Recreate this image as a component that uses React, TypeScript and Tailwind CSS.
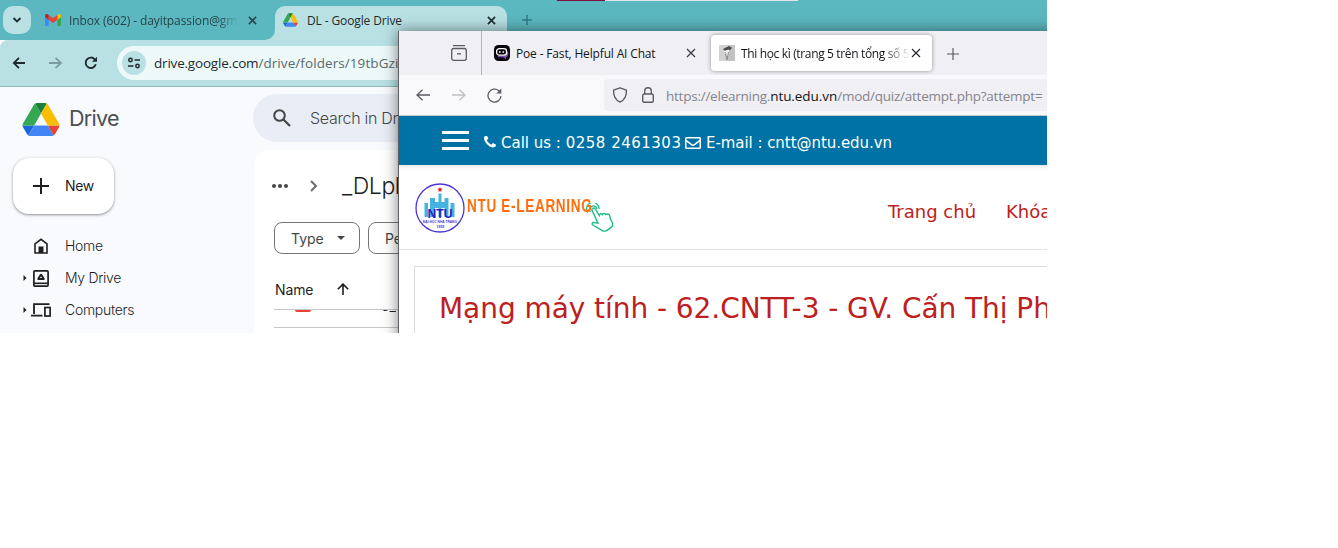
import React from "react";
import { FaRegEnvelope } from "react-icons/fa";

const ui = "font-['Open_Sans','Noto_Sans',sans-serif]";
const verdana = "font-['DejaVu_Sans',sans-serif]";

function Ic({ w, h = w, vb, className = "", children }: { w: number; h?: number; vb?: string; className?: string; children: React.ReactNode }) {
  return (
    <svg width={w} height={h} viewBox={vb ?? `0 0 ${w} ${h}`} className={`shrink-0 ${className}`} fill="none">
      {children}
    </svg>
  );
}

function DriveLogo({ w, h }: { w: number; h: number }) {
  return (
    <Ic w={w} h={h} vb="0 0 87.3 78">
      <path d="m6.6 66.85 3.85 6.65c.8 1.4 1.95 2.5 3.3 3.3l13.75-23.8h-27.5c0 1.55.4 3.1 1.2 4.5z" fill="#1967d2" />
      <path d="m43.65 25-13.75-23.8c-1.35.8-2.5 1.9-3.3 3.3l-25.4 44a9.06 9.06 0 0 0 -1.2 4.5h27.5z" fill="#34a853" />
      <path d="m73.55 76.8c1.35-.8 2.5-1.9 3.3-3.3l1.6-2.75 7.65-13.25c.8-1.4 1.2-2.95 1.2-4.5h-27.5l5.85 11.5z" fill="#ea4335" />
      <path d="m43.65 25 13.75-23.8c-1.35-.8-2.9-1.2-4.5-1.2h-18.5c-1.6 0-3.15.45-4.5 1.2z" fill="#188038" />
      <path d="m59.8 53h-32.3l-13.75 23.8c1.35.8 2.9 1.2 4.5 1.2h50.8c1.6 0 3.15-.45 4.5-1.2z" fill="#4285f4" />
      <path d="m73.4 26.5-12.7-22c-.8-1.4-1.95-2.5-3.3-3.3l-13.75 23.8 16.15 28h27.45c0-1.55-.4-3.1-1.2-4.5z" fill="#fbbc04" />
    </Ic>
  );
}

function Gmail() {
  return (
    <Ic w={16} h={12} vb="52 42 88 66">
      <path fill="#4285f4" d="M58 108h14V74L52 59v43c0 3.32 2.69 6 6 6" />
      <path fill="#34a853" d="M120 108h14c3.32 0 6-2.69 6-6V59l-20 15" />
      <path fill="#fbbc04" d="M120 48v26l20-15v-8c0-7.42-8.47-11.65-14.4-7.2" />
      <path fill="#ea4335" d="M72 74V48l24 18 24-18v26L96 92" />
      <path fill="#c5221f" d="M52 51v8l20 15V48l-5.6-4.2c-5.94-4.45-14.4-.22-14.4 7.2" />
    </Ic>
  );
}

function Cross({ size, color, sw }: { size: number; color: string; sw: number }) {
  return (
    <Ic w={size} vb="0 0 10 10">
      <path d="M1 1l8 8M9 1l-8 8" stroke={color} strokeWidth={sw} />
    </Ic>
  );
}

function ChromeTabs() {
  return (
    <div className="flex h-10 items-start bg-[#5cb8c0]">
      <div className="ml-[3px] mt-1.5 flex h-7 w-7 items-center justify-center rounded-[10px] bg-[#b9e1e4]">
        <Ic w={10} h={6}><path d="M1.500 1l3.500 3.400L8.500 1" stroke="#1f2a2c" strokeWidth="1.800" /></Ic>
      </div>
      <div className="relative flex h-10 w-[244px] items-center pl-[14px]">
        <Gmail />
        <span className={`${ui} ml-2 mt-px block w-[169px] overflow-hidden whitespace-nowrap text-[12px] tracking-[-0.1px] text-[#264348] [mask-image:linear-gradient(to_right,black_88%,transparent)]`}>
          Inbox (602) - dayitpassion@gm
        </span>
        <span className="ml-[10px] flex"><Cross size={9} color="#27474c" sw={1.800} /></span>
        <Ic w={10} className="absolute bottom-0 right-0"><path d="M10 0v10H0A10 10 0 0 0 10 0z" fill="#b9e1e4" /></Ic>
      </div>
      <div className="mt-1.5 flex h-[34px] w-[232px] items-center rounded-t-[10px] bg-[#b9e1e4] pb-1.5 pl-2">
        <DriveLogo w={15} h={14} />
        <span className={`${ui} ml-[9px] mt-px block w-[170px] whitespace-nowrap text-[12px] tracking-[-0.12px] text-[#1f2a2c]`}>DL - Google Drive</span>
        <span className="ml-[10px] flex"><Cross size={9} color="#1f2a2c" sw={1.800} /></span>
      </div>
      <span className="ml-[15px] mt-[15px]"><Ic w={10}><path d="M5 0v10M0 5h10" stroke="#2f7d85" strokeWidth="1.500" /></Ic></span>
    </div>
  );
}

function ChromeToolbar() {
  return (
    <div className="flex h-[47px] items-center rounded-tl-lg border-b border-[#8fb9bc] bg-[#b9e1e4] pl-3">
      <Ic w={14} h={12}><path d="M13 6H2M7 .8L1.800 6 7 11.200" stroke="#1f2a2c" strokeWidth="1.800" /></Ic>
      <Ic w={14} h={12} className="ml-[23px]"><path d="M0 6h12M6.500 .8L12 6 6.500 11.200" stroke="#7c9ea1" strokeWidth="1.800" /></Ic>
      <Ic w={14} className="ml-[21px]">
        <path d="M11.800 8.300A5.200 5.200 0 1 1 10.700 3.300L12 4.600" stroke="#1f2a2c" strokeWidth="1.900" />
        <path d="M13 .7v5.100H7.900z" fill="#1f2a2c" />
      </Ic>
      <div className="ml-[19px] flex h-[34px] w-[400px] items-center rounded-l-full bg-[#edf9f9] pl-[5px]">
        <div className="flex h-6 w-6 items-center justify-center rounded-full bg-[#b9e1e4]">
          <Ic w={12} h={12}>
            <circle cx="2.500" cy="3" r="1.700" stroke="#1f2a2c" strokeWidth="1.500" />
            <path d="M6.500 3H12M0 9h5.500" stroke="#1f2a2c" strokeWidth="1.700" />
            <circle cx="9.500" cy="9" r="1.700" stroke="#1f2a2c" strokeWidth="1.500" />
          </Ic>
        </div>
        <span className={`${ui} ml-2 whitespace-nowrap text-[13.5px] text-[#5b696b]`}>
          <span className="tracking-[-0.2px] text-[#1f2a2c]">drive.google.com</span><span className="tracking-[0.08px]">/drive/folders/19tbGzic</span>
        </span>
      </div>
    </div>
  );
}

function NavRow({ label, arrow, icon }: { label: string; arrow?: boolean; icon: React.ReactNode }) {
  return (
    <div className="flex h-8 items-center pl-[23px]">
      <span className="w-[7px]">{arrow && <Ic w={4} h={6}><path d="M.5 0l3 3-3 3z" fill="#1f1f1f" /></Ic>}</span>
      <span className="flex w-[22px] justify-center">{icon}</span>
      <span className="-mt-0.5 ml-[13px] whitespace-nowrap font-['Inter','Roboto',sans-serif] text-[14px] font-light tracking-[-0.3px] text-[#1f1f1f]">{label}</span>
    </div>
  );
}

function Sidebar() {
  return (
    <div className="w-[253px] shrink-0">
      <div className="flex h-16 items-center pl-[22px]">
        <DriveLogo w={38} h={33} />
        <span className="-mt-0.5 ml-[9px] font-['Inter',sans-serif] text-[21.5px] tracking-[-0.7px] text-[#4c4f52]">Drive</span>
      </div>
      <div className="ml-[13px] mt-[7px] flex h-14 w-[101px] items-center rounded-2xl bg-white pl-5 shadow-[0_1px_2px_rgba(60,64,67,0.4),0_1px_3px_1px_rgba(60,64,67,0.15)]">
        <Ic w={16}><path d="M8 0v16M0 8h16" stroke="#1f1f1f" strokeWidth="2" /></Ic>
        <span className="-mt-0.5 ml-4 font-['Inter',sans-serif] text-[14px] tracking-[-0.3px] text-[#1f1f1f]">New</span>
      </div>
      <div className="mt-4">
        <NavRow label="Home" icon={<Ic w={14} h={16}><path d="M1 15V5.800L7 1.300l6 4.500V15z" stroke="#1f1f1f" strokeWidth="1.600" /><path d="M4.500 8.500h5V15h-5z" fill="#1f1f1f" /></Ic>} />
        <NavRow arrow label="My Drive" icon={<Ic w={16} h={17}><rect x=".9" y=".9" width="14.200" height="15.200" rx="1" stroke="#1f1f1f" strokeWidth="1.700" /><path d="M1 13.300h14" stroke="#1f1f1f" strokeWidth="1.600" /><path d="M8 4.900L5.500 8.900h5z" stroke="#1f1f1f" strokeWidth="2.400" strokeLinejoin="round" /><path d="M8 6.300l1 1.800H7z" fill="#f9fafe" /></Ic>} />
        <NavRow arrow label="Computers" icon={<Ic w={20} h={14}><path d="M18.500 1.200H3V11M0 12.700h11.500" stroke="#1f1f1f" strokeWidth="1.800" /><rect x="13.900" y="4.500" width="5.200" height="8.500" stroke="#1f1f1f" strokeWidth="1.700" /></Ic>} />
      </div>
    </div>
  );
}

function DriveMain() {
  return (
    <div className="flex w-[500px] shrink-0 flex-col">
      <div className="mt-[7px] flex h-12 shrink-0 items-center rounded-full bg-[#e9eef6] pl-5">
        <Ic w={18}><circle cx="6.500" cy="6.500" r="5.300" stroke="#444746" strokeWidth="2" /><path d="M10.500 10.500l6.500 6.500" stroke="#444746" strokeWidth="2.200" /></Ic>
        <span className="ml-[19px] font-['Inter',sans-serif] text-[16px] font-light tracking-[-0.3px] text-[#444746]">Search in Drive</span>
      </div>
      <div className="ml-px mt-2 grow rounded-tl-2xl bg-white">
        <div className="flex h-[72px] items-center pl-[18px]">
          <Ic w={16} h={4}><circle cx="2" cy="2" r="2" fill="#444746" /><circle cx="8" cy="2" r="2" fill="#444746" /><circle cx="14" cy="2" r="2" fill="#444746" /></Ic>
          <Ic w={8} h={12} className="ml-[22px]"><path d="M1 1l5 5-5 5" stroke="#6b6e6d" strokeWidth="2" /></Ic>
          <span className="ml-6 font-['Inter',sans-serif] text-[23px] font-light tracking-[-0.4px] text-[#1f1f1f]">_DLpl</span>
        </div>
        <div className="flex gap-2 pl-5">
          <div className="flex h-8 w-[86px] items-center rounded-lg border border-[#747775] pl-4">
            <span className="w-[46px] font-['Inter',sans-serif] text-[14px] text-[#444746]">Type</span>
            <Ic w={8} h={4}><path d="M0 0h8L4 4z" fill="#444746" /></Ic>
          </div>
          <div className="flex h-8 w-[100px] items-center rounded-lg border border-[#747775] pl-4 font-['Inter',sans-serif] text-[14px] text-[#444746]">People</div>
        </div>
        <div className="ml-5 flex h-[56px] items-end border-b border-[#c7c7c7] pb-[9px] pl-px">
          <span className="w-[62px] font-['Inter',sans-serif] text-[14px] leading-5 tracking-[-0.1px] text-[#1f1f1f]">Name</span>
          <Ic w={12} h={12} className="mb-[5px]"><path d="M6 12V1.500M.8 6.300L6 1.100l5.200 5.200" stroke="#1f1f1f" strokeWidth="1.600" /></Ic>
        </div>
        <div className="ml-5 flex h-[18px] items-start border-b border-[#c7c7c7] pl-[21px]">
          <div className="h-[2px] w-4 rounded-b-sm bg-[#ea4335]" />
          <div className="ml-[70px] h-[2px] w-[15px] overflow-hidden">
            <span className="-mt-[13px] block font-['Inter',sans-serif] text-[14px] leading-[17px] text-[#1f1f1f]">5_</span>
          </div>
        </div>
      </div>
    </div>
  );
}

function FirefoxTabs() {
  return (
    <div className="flex h-11 shrink-0 items-center bg-[#f0eff4]">
      <div className="flex h-full w-[83px] items-center border-r border-[#b4b3b9] pl-[52px]">
        <Ic w={16} h={16}>
          <path d="M2.500 .7h11" stroke="#5b5b66" strokeWidth="1.300" strokeLinecap="round" />
          <rect x=".7" y="3.500" width="14.600" height="11.800" rx="2" stroke="#5b5b66" strokeWidth="1.300" />
          <path d="M6 8.800h4" stroke="#5b5b66" strokeWidth="1.300" />
        </Ic>
      </div>
      <div className="flex w-[229px] items-center pl-3">
        <Ic w={16}>
          <rect width="16" height="16" rx="4.500" fill="#08060d" />
          <path d="M4 11.500h7.500c1.500 0 2-1 2-2.500V7" stroke="#7d4bb3" strokeWidth="1.500" />
          <path d="M8.500 11.500h3.500v3z" fill="#7d4bb3" />
          <rect x="2.600" y="3.600" width="10" height="6.600" rx="2.800" fill="#08060d" stroke="#fff" strokeWidth="1.300" />
          <path d="M5 7h1.600M8.500 7h1.600" stroke="#fff" strokeWidth="1.500" />
        </Ic>
        <span className={`${ui} ml-[6px] mt-0.5 block w-[168px] whitespace-nowrap text-[12px] tracking-[-0.16px] text-[#15141a]`}>Poe - Fast, Helpful AI Chat</span>
        <span className="ml-[2px] flex"><Cross size={10} color="#3a3944" sw={1.200} /></span>
      </div>
      <div className="flex h-9 w-[221px] items-center rounded bg-white pl-2 shadow-[0_0_4px_rgba(0,0,0,0.4)]">
        <Ic w={16}>
          <rect width="16" height="16" fill="#d2d2d2" />
          <path d="M10 0h6v16h-7z" fill="#c2c2c2" />
          <path d="M4 4l6-3 3 2-2 2-5 1z" fill="#4a4a4a" />
          <path d="M5 6l5-1.500v4L8.500 11 6 9z" fill="#f3f3f3" />
          <path d="M5.500 7.500l2 1M9.500 7L8 15M6.500 9L8 15" stroke="#777" strokeWidth=".8" />
        </Ic>
        <span className={`${ui} ml-[6px] mt-0.5 block w-[169px] overflow-hidden whitespace-nowrap text-[12px] tracking-[-0.35px] text-[#15141a] [mask-image:linear-gradient(to_right,black_84%,transparent)]`}>Thi học kì (trang 5 trên tổng số 5</span>
        <span className="ml-px flex"><Cross size={10} color="#2a2932" sw={1.200} /></span>
      </div>
      <Ic w={12} className="ml-[15px] mt-px"><path d="M6 0v12M0 6h12" stroke="#5b5b66" strokeWidth="1.200" /></Ic>
    </div>
  );
}

function FirefoxToolbar() {
  return (
    <div className="flex h-[41px] shrink-0 items-center border-b border-[#c9ccd2] bg-[#f9f9fb] pl-[17px]">
      <Ic w={14} h={12}><path d="M14 6H1M6.500 .7L1 6l5.500 5.300" stroke="#5b5b66" strokeWidth="1.300" /></Ic>
      <Ic w={14} h={12} className="ml-[22px]"><path d="M0 6h13M7.500 .7L13 6l-5.500 5.300" stroke="#bdbdc4" strokeWidth="1.300" /></Ic>
      <Ic w={15} h={15} className="ml-[21px]"><path d="M14 8A6.500 6.500 0 1 1 11.800 2.700L13 4" stroke="#5b5b66" strokeWidth="1.300" /><path d="M14.300 .5v5H9.300z" fill="#5b5b66" /></Ic>
      <div className="ml-[102px] flex h-8 w-[600px] items-center rounded-l bg-[#f0eff4] pl-2">
        <Ic w={16} h={16}><path d="M8 .8L1.600 3.100c-.3 5.300 1.200 9.500 6.400 12 5.200-2.500 6.700-6.700 6.400-12z" stroke="#5b5b66" strokeWidth="1.400" strokeLinejoin="round" /></Ic>
        <Ic w={12} h={16} className="ml-[14px]"><rect x=".7" y="7" width="10.600" height="8.300" rx="1.500" stroke="#5b5b66" strokeWidth="1.400" /><path d="M2.700 7V4a3.300 3.300 0 0 1 6.600 0v3" stroke="#5b5b66" strokeWidth="1.400" /></Ic>
        <span className={`${ui} ml-[12px] mt-[3px] whitespace-nowrap text-[13.5px] tracking-[-0.24px] text-[#85848c]`}>
          https://elearning.<span className="tracking-[-0.06px] text-[#15141a]">ntu.edu.vn</span>/mod/quiz/attempt.php?attempt=<span className="ml-[3px]">1</span>
        </span>
      </div>
    </div>
  );
}

function SiteLogo() {
  return (
    <div className="flex h-[52px] items-center">
      <Ic w={50} className="mt-px">
        <circle cx="25" cy="25" r="24" fill="#fff" stroke="#4b35d8" strokeWidth="1.300" />
        <path d="M25 4l.8 1.600 1.800.2-1.300 1.300.3 1.800-1.600-.9-1.600.9.300-1.800-1.300-1.300 1.800-.2z" fill="#e02020" />
        <path d="M9.500 20h3.500v14H9.500zM15 15h5v19h-5zM23.500 10.500h3V34h-3zM29.500 15h4v19h-4zM35.500 20H39.500v14h-4zM20 19h3.500v6H20zM26.500 19h3v6h-3z" fill="#45b4e2" />
        <text x="12.500" y="34.500" fontFamily="Liberation Sans" fontWeight="bold" fontSize="13.500" textLength="25" lengthAdjust="spacingAndGlyphs" fill="#241fc0">NTU</text>
        <text x="8" y="40" fontFamily="Liberation Sans" fontWeight="bold" fontSize="4" textLength="34" lengthAdjust="spacingAndGlyphs" fill="#4b35d8">ĐẠI HỌC NHA TRANG</text>
        <text x="21.500" y="44.500" fontFamily="Liberation Sans" fontWeight="bold" fontSize="3.500" fill="#4b35d8">1959</text>
      </Ic>
      <span className="-mt-px ml-[2px] block w-[119px] origin-left scale-x-[0.753] whitespace-nowrap font-['Liberation_Sans',sans-serif] text-[18px] font-bold tracking-[0.9px] text-[#ff6f0f]">NTU E-LEARNING</span>
      <Ic w={28} h={30} className="mt-[21px]">
        <path d="M2 9.500A6.200 6.200 0 1 1 13 6M4.500 9A3.700 3.700 0 1 1 11 6" stroke="#1fbd86" strokeWidth="1.300" />
        <path d="M6.500 5.500c1-.9 2-.6 2.700.4l4 6.500c.3-1.700 2.300-2.300 3.300-.9.600-1.400 2.800-1.500 3.500.1 1.200-1 2.800-.7 3.500.6.500 1.300.4 2.300 1 3.700l2.100 4.300c.8 1.900-.8 3.900-2.800 5.200-1.300.9-2.300 1.900-3.900 2.500-1.800.6-3.300 0-4.400-.8l-8.600-5.100c-1.300-.9-.6-2.700.8-2.500l4.300.7L6.200 7.700c-.5-.8-.4-1.600.3-2.200z" fill="#fff" stroke="#1fbd86" strokeWidth="1.400" />
      </Ic>
    </div>
  );
}

function Firefox() {
  return (
    <div className="absolute left-[398px] top-[31px] flex h-[320px] w-[680px] flex-col border-l border-[#5e6166] bg-white shadow-[0_0_14px_rgba(0,0,0,0.5)]">
      <FirefoxTabs />
      <FirefoxToolbar />
      <div className={`${verdana} relative flex h-[49px] shrink-0 items-center bg-[#0072a6] pl-[43px] pt-[2px] text-[15px] text-white shadow-[0_2px_4px_rgba(0,0,0,0.1)]`}>
        <Ic w={27} h={19} className="-mt-0.5"><path d="M0 1.500h27M0 9.500h27M0 17.500h27" stroke="#fff" strokeWidth="3" /></Ic>
        <Ic w={12} vb="192 192 1408 1408" className="ml-[15px]">
          <path fill="#fff" d="M1600 1240q0 27-10 70.500t-21 68.500q-21 50-122 106-94 51-186 51-27 0-53-3.500t-57.500-12.500-47-14.500-55.500-20.500-49-18q-98-35-175-83-127-79-264-216t-216-264q-48-77-83-175-3-9-18-49t-20.500-55.500-14.500-47-12.500-57.500-3.500-53q0-92 51-186 56-101 106-122 25-11 68.500-21t70.500-10q14 0 21 3 18 6 53 76 11 19 30 54t35 63.500 31 53.500q3 4 17.500 25t21.500 35.500 7 28.500q0 20-28.500 50t-62 55-62 53-28.500 46q0 9 5 22.500t8.500 20.500 14 24 11.500 19q76 137 174 235t235 174q2 1 19 11.500t24 14 20.500 8.500 22.500 5q18 0 46-28.500t53-62 55-62 50-28.500q14 0 28.500 7t35.500 21.500 25 17.500q25 15 53.500 31t63.500 35 54 30q70 35 76 53 3 7 3 21z" />
        </Ic>
        <span className="ml-[5px] mt-[3px] w-[181px] whitespace-nowrap">Call us : <span className="tracking-[0.5px]">0258 2461303</span></span>
        <FaRegEnvelope className="ml-[3px] mt-[3px] h-4 w-4" />
        <span className="ml-[5px] mt-[3px] whitespace-nowrap tracking-[-0.05px]">E-mail : cntt@ntu.edu.vn</span>
      </div>
      <div className="flex h-[85px] shrink-0 items-center border-b border-[#e3e3e3] pl-4">
        <SiteLogo />
        <div className={`${verdana} ml-[274px] mt-2 flex gap-[30px] whitespace-nowrap text-[18px] text-[#bd2020]`}>
          <span>Trang chủ</span>
          <span>Khóa</span>
        </div>
      </div>
      <div className={`${verdana} ml-[15px] mt-4 h-[100px] border-l border-t border-[#dcdcdc] pl-6 pt-[22px] text-[28px] leading-10 tracking-[-0.06px] text-[#bd2020]`}>
        <span className="whitespace-nowrap">Mạng máy tính - 62.CNTT-3 - GV. Cấn Thị Ph</span>
      </div>
    </div>
  );
}

export default function App() {
  return (
    <div className="h-[548px] w-[1338px] overflow-hidden bg-white">
      <div className="relative flex h-[333px] w-[1047px] flex-col overflow-hidden bg-[#f9fafe]">
        <ChromeTabs />
        <ChromeToolbar />
        <div className="flex grow">
          <Sidebar />
          <DriveMain />
        </div>
        <div className="absolute left-[557px] top-0 flex h-px w-[241px]">
          <div className="w-12 bg-[#7a1238]" />
          <div className="grow bg-[#e3e6e6]" />
        </div>
        <Firefox />
      </div>
    </div>
  );
}
